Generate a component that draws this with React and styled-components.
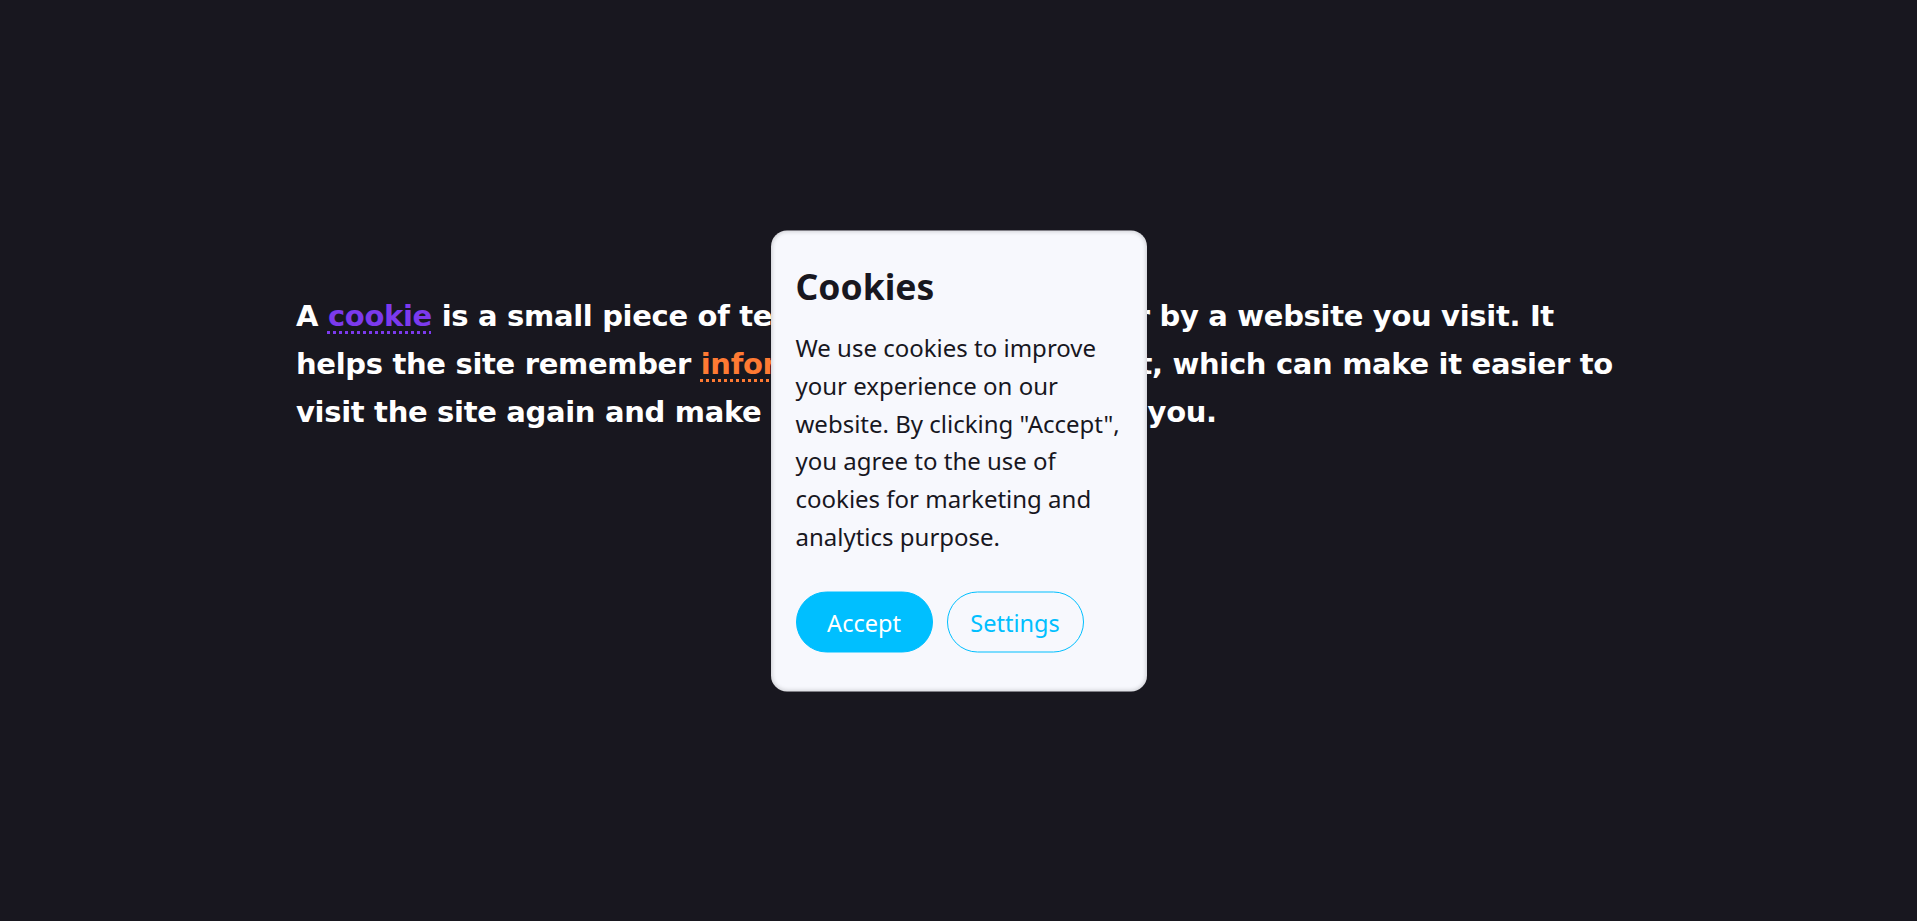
import styled, { createGlobalStyle } from "styled-components";

/* 페이지 전역 Style */
const GlobalStyle = createGlobalStyle`
  html, body {
    margin: 0;
    padding: 0;
    background: #18171f;
  }

  body {
    min-height: 100vh;
  }
`;

/* 쿠키 안내 페이지 */
const App = () => {
  return (
    <>
      <GlobalStyle />
      <Page>
        <Intro>
          A <Term $color="#7c3aed">cookie</Term> is a small piece of text sent to your browser by a
          website you visit. It helps the site remember{" "}
          <Term $color="#ff7a33">information</Term> about your visit, which can make it easier to
          visit the site again and make the site more useful to you.
        </Intro>
        <Card>
          <Title>Cookies</Title>
          <Message>
            We use cookies to improve your experience on our website. By clicking "Accept", you
            agree to the use of cookies for marketing and analytics purpose.
          </Message>
          <Actions>
            <Button $primary>Accept</Button>
            <Button>Settings</Button>
          </Actions>
        </Card>
      </Page>
    </>
  );
};

export default App;

/* 최상단 div Style */
const Page = styled.div`
  min-height: 100vh;
  display: flex;
  justify-content: center;
  padding-top: 292px;
  box-sizing: border-box;
`;

/* 소개 문단 Style */
const Intro = styled.p`
  width: 1325px;
  margin: 0;
  font-family: "DejaVu Sans", sans-serif;
  font-weight: bold;
  font-size: 29px;
  letter-spacing: -0.32px;
  line-height: 48px;
  color: #ffffff;
`;

/* 강조 단어 Style */
const Term = styled.span`
  color: ${(p) => p.$color};
  text-decoration: underline dotted;
  text-decoration-thickness: 3px;
  text-underline-offset: 5px;
`;

/* 쿠키 카드 Style */
const Card = styled.div`
  position: fixed;
  top: 50%;
  left: 50%;
  transform: translate(-50%, -50%);
  width: 376px;
  height: 461px;
  box-sizing: border-box;
  padding: 34px 25px 0;
  background: #f7f8fd;
  border-radius: 16px;
  box-shadow: inset 0 0 4px 1px rgba(0, 0, 0, 0.18);
  font-family: "Noto Sans", sans-serif;
  color: #18171f;
`;

/* 제목 Style */
const Title = styled.h2`
  margin: 0 0 22px;
  font-size: 35.5px;
  line-height: 42.6px;
  font-weight: 700;
`;

/* 안내 문구 Style */
const Message = styled.p`
  margin: 0 0 37px;
  font-size: 24px;
  line-height: 37.7px;
`;

/* 버튼 영역 Style */
const Actions = styled.div`
  display: flex;
  gap: 14px;
`;

/* 버튼 Style */
const Button = styled.button`
  width: 137px;
  height: 61px;
  border-radius: 31px;
  border: 1px solid #00bfff;
  background: ${(p) => (p.$primary ? "#00bfff" : "transparent")};
  color: ${(p) => (p.$primary ? "#ffffff" : "#00bfff")};
  font-family: "Noto Sans", sans-serif;
  font-size: 23.5px;
  cursor: pointer;
`;
